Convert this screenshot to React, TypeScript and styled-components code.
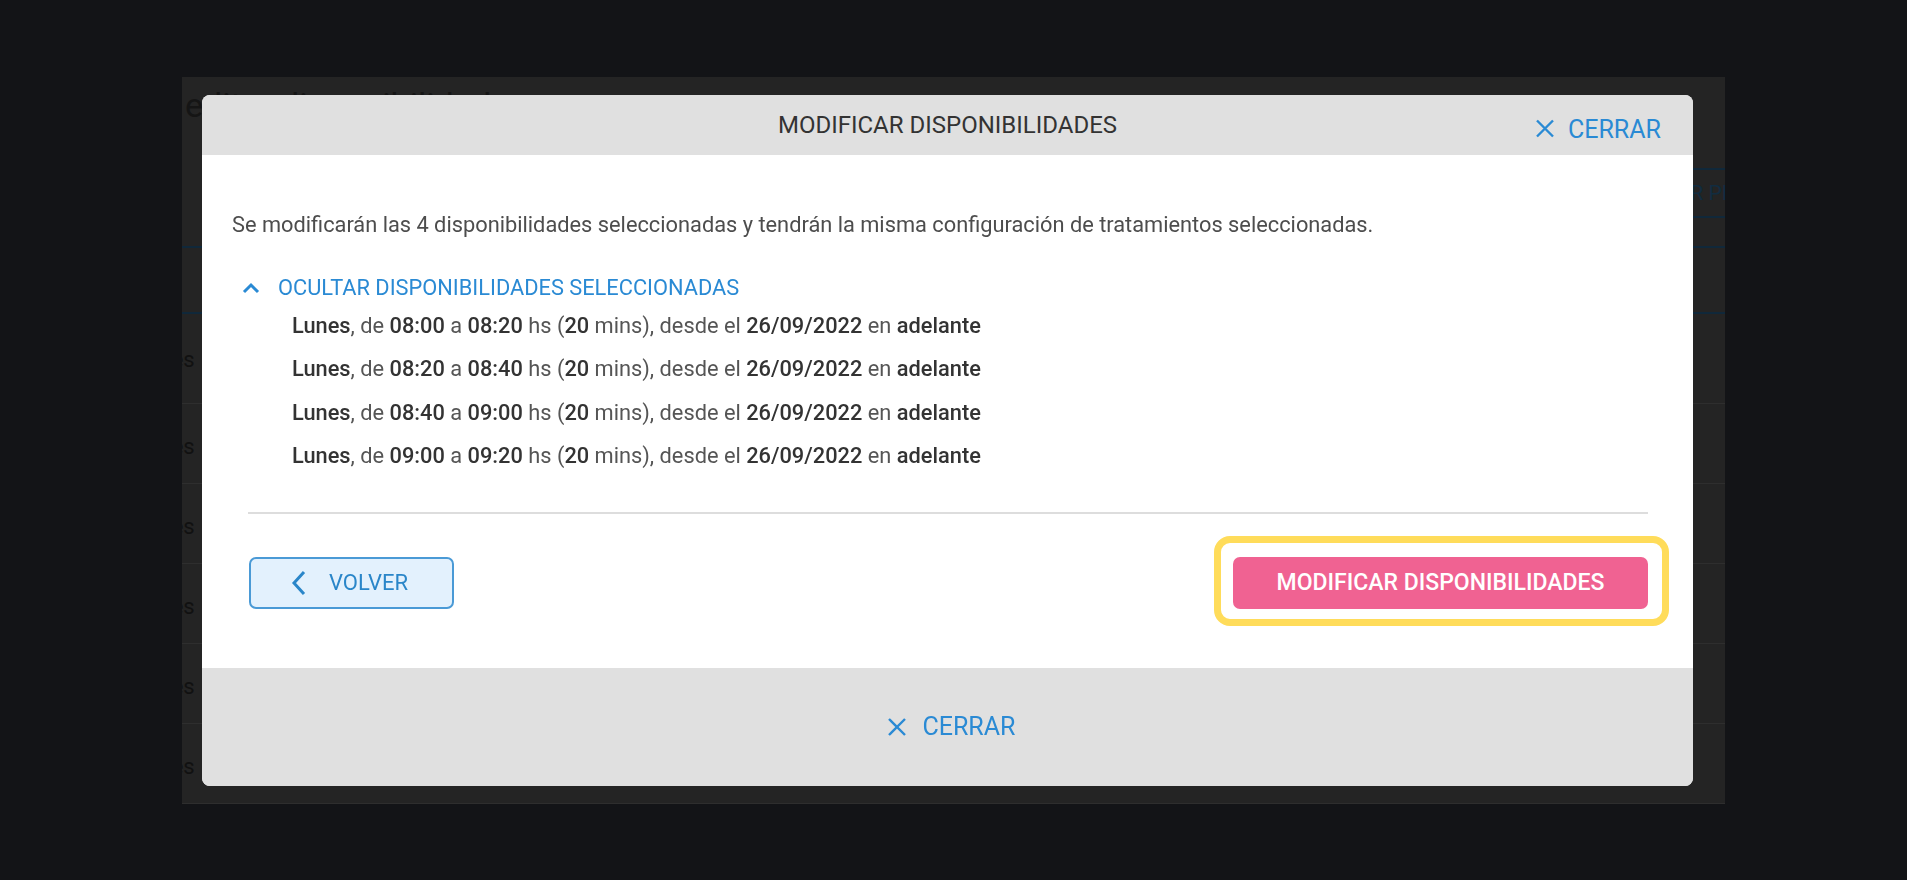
import React from "react";
import styled, { createGlobalStyle } from "styled-components";

const GlobalStyle = createGlobalStyle`
  html, body {
    margin: 0;
    padding: 0;
    background: #131417;
    font-family: Roboto, "Noto Sans", "Liberation Sans", sans-serif;
  }
  #root { height: 880px; }
`;

const Screen = styled.div`
  height: 880px;
  display: flex;
  align-items: center;
  justify-content: center;
`;

const PagePanel = styled.div`
  width: 1543px;
  height: 727px;
  background: #242424;
  overflow: hidden;
  display: flex;
  flex-direction: column;
`;

const PageTitle = styled.div`
  height: 80px;
  padding: 8px 0 0 3px;
  box-sizing: border-box;
  font-size: 34px;
  line-height: 40px;
  color: #151515;
  white-space: nowrap;
`;

const PageToolbar = styled.div`
  margin-top: 11px;
  height: 50px;
  display: flex;
  justify-content: flex-end;
`;

const GhostButton = styled.div`
  height: 50px;
  box-sizing: border-box;
  border: 2px solid #10283a;
  border-right: none;
  padding: 0 0 0 20px;
  margin-right: -70px;
  display: flex;
  align-items: center;
  font-size: 21px;
  color: #112c40;
  white-space: nowrap;
`;

const TableHead = styled.div`
  margin-top: 28px;
  height: 68px;
  box-sizing: border-box;
  border-top: 2px solid #10283a;
  border-bottom: 2px solid #10283a;
`;

const TableRow = styled.div<{ $first?: boolean }>`
  height: ${(p) => (p.$first ? 90 : 80)}px;
  box-sizing: border-box;
  border-bottom: 1px solid #2e2e2e;
  display: flex;
  align-items: center;
  padding: ${(p) => (p.$first ? "2px" : "6px")} 0 0 0;
  margin-left: -46px;
  font-size: 22px;
  color: #111;
  white-space: nowrap;
`;

const Overlay = styled.div`
  position: fixed;
  inset: 0;
  display: flex;
  align-items: center;
  justify-content: center;
  padding-right: 12px;
`;

const Modal = styled.div`
  width: 1491px;
  border-radius: 8px;
  overflow: hidden;
  background: #fff;
  display: flex;
  flex-direction: column;
`;

const Header = styled.div`
  height: 60px;
  background: #e0e0e0;
  position: relative;
  display: flex;
  align-items: center;
  justify-content: center;
`;

const Title = styled.div`
  font-size: 24px;
  color: #333;
`;

const CloseButton = styled.div<{ $corner?: boolean }>`
  display: flex;
  align-items: center;
  gap: ${(p) => (p.$corner ? 13 : 15)}px;
  color: #2a8ad4;
  font-size: 25px;
  cursor: pointer;
  ${(p) =>
    p.$corner
      ? `position: absolute; right: 32px; top: 50%; transform: translateY(-50%); margin-top: 4px;`
      : ""}
`;

const Body = styled.div`
  height: 513px;
  box-sizing: border-box;
  padding: 55px 30px 0 30px;
  display: flex;
  flex-direction: column;
`;

const Paragraph = styled.p`
  margin: 0;
  font-size: 21.8px;
  line-height: 30px;
  color: #4d4d4d;
`;

const Toggle = styled.div`
  margin-top: 33px;
  height: 30px;
  display: flex;
  align-items: center;
  padding-left: 10px;
  gap: 18px;
  color: #2a8ad4;
  font-size: 21.8px;
`;

const List = styled.div`
  padding-left: 60px;
  padding-top: 1px;
  display: flex;
  flex-direction: column;
`;

const Item = styled.div`
  height: 43.5px;
  line-height: 43.5px;
  font-size: 21.8px;
  color: #555;
  b {
    font-weight: 500;
    color: #333;
  }
`;

const Divider = styled.div`
  margin: 34px 15px 0 16px;
  height: 2px;
  background: #ddd;
`;

const Actions = styled.div`
  margin: 43px 15px 0 17px;
  display: flex;
  justify-content: space-between;
  align-items: center;
`;

const BackButton = styled.button`
  width: 205px;
  height: 52px;
  box-sizing: border-box;
  border: 2px solid #4a9ad6;
  border-radius: 7px;
  background: #e3f1fd;
  color: #2a86c9;
  font-family: inherit;
  font-size: 22px;
  display: flex;
  align-items: center;
  gap: 22px;
  padding: 0 0 0 40px;
  cursor: pointer;
`;

const PrimaryButton = styled.button`
  position: relative;
  width: 415px;
  height: 52px;
  border: none;
  border-radius: 7px;
  background: #f06292;
  color: #fff;
  font-family: inherit;
  font-size: 23px;
  font-weight: 500;
  cursor: pointer;
  &::after {
    content: "";
    position: absolute;
    top: -21px;
    bottom: -17px;
    left: -19px;
    right: -21px;
    border: 7px solid #ffdc5a;
    border-radius: 16px;
    pointer-events: none;
  }
`;

const Footer = styled.div`
  height: 118px;
  background: #e0e0e0;
  display: flex;
  align-items: center;
  justify-content: center;
  padding-left: 8px;
`;

const XIcon = ({ size }: { size: number }) => (
  <svg width={size} height={size} viewBox="0 0 20 20" fill="none">
    <path d="M2 2 L18 18 M18 2 L2 18" stroke="currentColor" strokeWidth="2.4" />
  </svg>
);

const ChevronUp = () => (
  <svg width="18" height="12" viewBox="0 0 18 12" fill="none">
    <path d="M2 10 L9 3 L16 10" stroke="currentColor" strokeWidth="3" />
  </svg>
);

const ChevronLeft = () => (
  <svg width="16" height="26" viewBox="0 0 16 26" fill="none">
    <path d="M13 2 L3 13 L13 24" stroke="currentColor" strokeWidth="3" />
  </svg>
);

const items = [
  ["08:00", "08:20"],
  ["08:20", "08:40"],
  ["08:40", "09:00"],
  ["09:00", "09:20"],
];

export default function App() {
  return (
    <>
      <GlobalStyle />
      <Screen>
        <PagePanel>
          <PageTitle>editar disponibilidades</PageTitle>
          <PageToolbar>
            <GhostButton>AGREGAR PERIODO</GhostButton>
          </PageToolbar>
          <TableHead />
          {[0, 1, 2, 3, 4, 5].map((i) => (
            <TableRow key={i} $first={i === 0}>
              Lunes
            </TableRow>
          ))}
        </PagePanel>
      </Screen>
      <Overlay>
        <Modal>
          <Header>
            <Title>MODIFICAR DISPONIBILIDADES</Title>
            <CloseButton $corner>
              <XIcon size={20} />
              CERRAR
            </CloseButton>
          </Header>
          <Body>
            <Paragraph>
              Se modificarán las 4 disponibilidades seleccionadas y tendrán la misma configuración de
              tratamientos seleccionadas.
            </Paragraph>
            <Toggle>
              <ChevronUp />
              OCULTAR DISPONIBILIDADES SELECCIONADAS
            </Toggle>
            <List>
              {items.map(([a, b]) => (
                <Item key={a}>
                  <b>Lunes</b>, de <b>{a}</b> a <b>{b}</b> hs (<b>20</b> mins), desde el{" "}
                  <b>26/09/2022</b> en <b>adelante</b>
                </Item>
              ))}
            </List>
            <Divider />
            <Actions>
              <BackButton>
                <ChevronLeft />
                VOLVER
              </BackButton>
              <PrimaryButton>MODIFICAR DISPONIBILIDADES</PrimaryButton>
            </Actions>
          </Body>
          <Footer>
            <CloseButton>
              <XIcon size={20} />
              CERRAR
            </CloseButton>
          </Footer>
        </Modal>
      </Overlay>
    </>
  );
}
